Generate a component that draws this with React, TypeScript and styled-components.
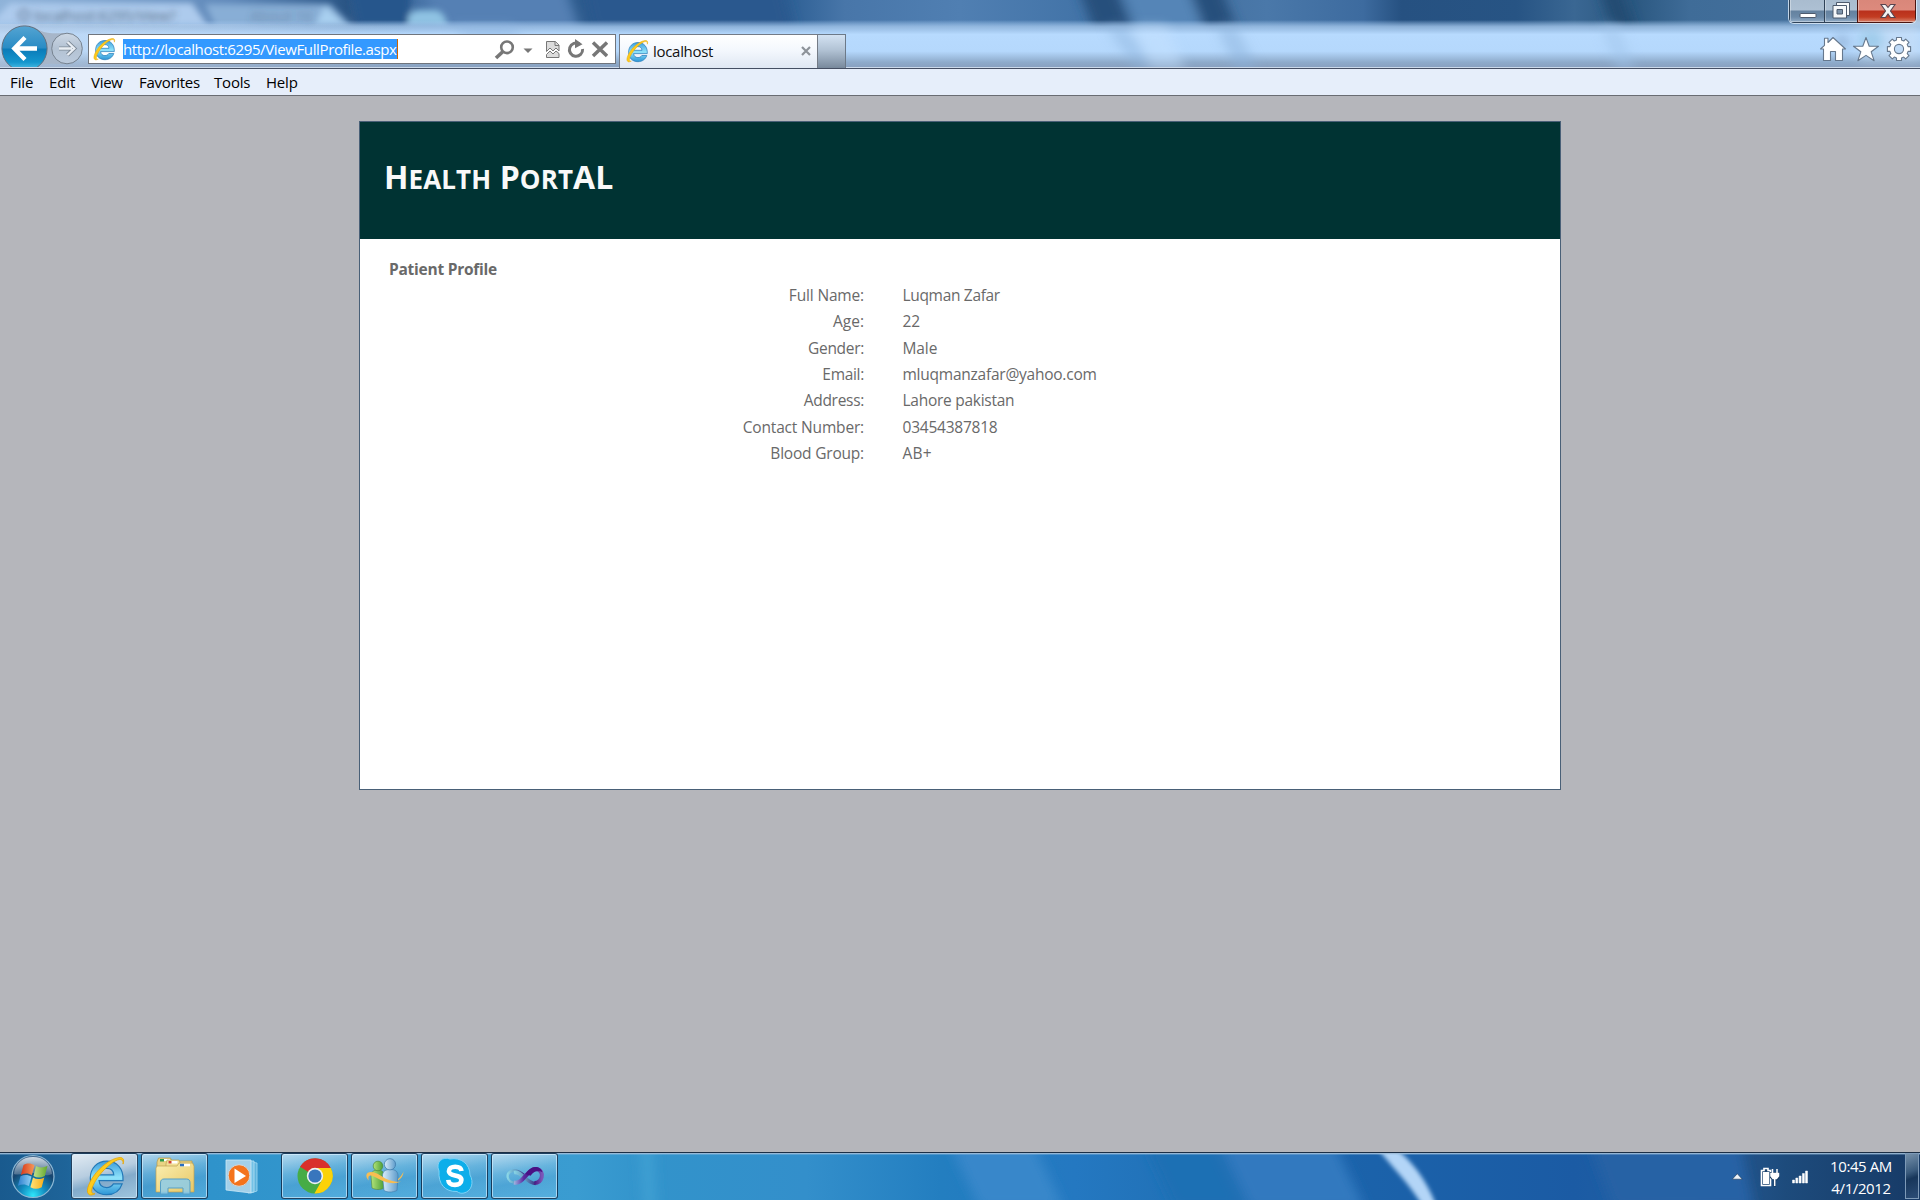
import React from "react";
import styled, { createGlobalStyle } from "styled-components";

const Global = createGlobalStyle`
  * { box-sizing: border-box; }
  html, body { margin: 0; padding: 0; }
  body { width: 1920px; height: 1200px; overflow: hidden; background: #b5b6bb; font-family: "Open Sans", "Noto Sans", sans-serif; }
  svg { display: block; flex: none; }
`;

const Screen = styled.div`
  width: 1920px;
  height: 1200px;
  display: flex;
  flex-direction: column;
  overflow: hidden;
`;

const Text = styled.span<{ $ls?: number; $size?: number }>`
  white-space: pre;
  letter-spacing: ${(p) => p.$ls ?? 0}px;
  font-size: ${(p) => p.$size ?? 15}px;
`;

/* ---------- window frame ---------- */
const Glass = styled.header`
  position: relative;
  height: 69px;
  flex: none;
  display: flex;
  flex-direction: column;
  overflow: hidden;
  border-bottom: 1px solid #454f63;
`;
const Backdrop = styled.svg`
  position: absolute;
  left: 0;
  top: 0;
`;
const CaptionRow = styled.div`
  position: relative;
  height: 24px;
  flex: none;
  display: flex;
  justify-content: flex-end;
  padding-right: 3px;
`;
const CaptionButtons = styled.div`
  display: flex;
  width: 129px;
  height: 24px;
  border: 1px solid rgba(225, 238, 250, 0.8);
  border-top: 0;
  border-radius: 0 0 6px 6px;
  overflow: hidden;
`;
const CaptionButton = styled.div<{ $w: number; $close?: boolean }>`
  width: ${(p) => p.$w}px;
  height: 23px;
  display: flex;
  justify-content: center;
  padding-left: 2px;
  border: 1px solid ${(p) => (p.$close ? "#4b1410" : "#2f4257")};
  border-top: 0;
  border-right-width: ${(p) => (p.$close ? 1 : 0)}px;
  box-shadow: inset 1px -1px 0 rgba(255, 255, 255, 0.35);
  background: ${(p) =>
    p.$close
      ? "linear-gradient(#d9877a 0, #dd8a7d 10px, #b9301c 11px, #c23c22 17px, #d8836c 22px)"
      : "linear-gradient(#a9bccf 0, #adc0d3 10px, #64819f 11px, #6c8aa9 17px, #93aec8 22px)"};
`;
const NavRow = styled.div`
  position: relative;
  height: 43px;
  flex: none;
  display: flex;
  align-items: flex-start;
`;
const NavButtons = styled.div`
  width: 88px;
  height: 43px;
`;
const AddressBar = styled.div`
  width: 528px;
  height: 30px;
  margin-top: 10px;
  display: flex;
  align-items: center;
  background: #fff;
  border: 1px solid #70757d;
  padding: 0 7px 0 3px;
`;
const Url = styled.div`
  margin-left: 7px;
  width: 275px;
  height: 20px;
  display: flex;
  align-items: center;
  background: #3399ff;
  border-right: 1px solid #cc6600;
  color: #fff;
`;
const AddressIcons = styled.div`
  margin-left: auto;
`;
const Tab = styled.div`
  margin: 10px 0 0 3px;
  width: 199px;
  height: 34px;
  display: flex;
  align-items: center;
  padding: 0 6px 2px 5px;
  border: 1px solid #747b86;
  border-bottom: 0;
  background: linear-gradient(#fff 0, #f3f7fd 16px, #dfe7f3 33px);
  color: #111;
`;
const TabLabel = styled.div`
  margin-left: 4px;
  flex: 1;
`;
const NewTab = styled.div`
  margin-top: 10px;
  width: 28px;
  height: 34px;
  border: 1px solid #6c7988;
  border-left: 0;
  border-bottom: 0;
  background: linear-gradient(#d3e2f2, #b2c3d5 45%, #78899c);
`;
const Tools = styled.div`
  margin: 11px 7px 0 auto;
`;
const MenuBar = styled.nav`
  height: 27px;
  flex: none;
  display: flex;
  align-items: center;
  padding-left: 10px;
  background: #e6eefa;
  border-bottom: 1px solid #696c72;
  color: #000;
`;
const MenuItem = styled.div<{ $w: number }>`
  width: ${(p) => p.$w}px;
`;

/* ---------- page ---------- */
const Page = styled.main`
  height: 1056px;
  flex: none;
  display: flex;
  justify-content: center;
  align-items: flex-start;
  padding-top: 25px;
  background: #b5b6bb;
`;
const Card = styled.section`
  width: 1202px;
  height: 669px;
  background: #fff;
  border: 1px solid #496077;
`;
const CardHeader = styled.div`
  height: 117px;
  padding: 32px 0 0 24px;
  background: #003333;
`;
const Title = styled.h1`
  margin: 0;
  font-size: 32px;
  line-height: 46px;
  font-weight: 700;
  color: #f9f9f9;
  letter-spacing: 0.1px;
  white-space: pre;
`;
const SmallCaps = styled.span`
  font-size: 26px;
  text-transform: uppercase;
`;
const Heading = styled.h2`
  margin: 18px 0 0 29px;
  line-height: 24px;
  font-weight: 700;
  color: #696969;
  display: flex;
`;
const Details = styled.dl`
  margin: 1px 0 0;
  display: grid;
  grid-template-columns: 504px 1fr;
  column-gap: 38.5px;
  grid-auto-rows: 26.33px;
  align-items: center;
  color: #696969;
`;
const Term = styled.dt`
  text-align: right;
`;
const Value = styled.dd`
  margin: 0;
`;

/* ---------- taskbar ---------- */
const TaskBar = styled.footer`
  position: relative;
  height: 48px;
  flex: none;
  display: flex;
  overflow: hidden;
  border-top: 1px solid #1c2f45;
`;
const Start = styled.div`
  position: relative;
  width: 71px;
  padding: 1px 0 0 10px;
`;
const TaskButton = styled.div<{ $kind?: "active" | "plain" }>`
  position: relative;
  width: 67px;
  height: 46px;
  margin-right: 3px;
  display: flex;
  align-items: center;
  justify-content: center;
  border-radius: 3px;
  border: 1px solid ${(p) => (p.$kind === "plain" ? "transparent" : "rgba(10,40,70,.85)")};
  box-shadow: ${(p) => (p.$kind === "plain" ? "none" : "inset 0 0 0 1px rgba(215,240,255,.65)")};
  padding-right: ${(p) => (p.$kind === "plain" ? 3 : 0)}px;
  background: ${(p) =>
    p.$kind === "plain"
      ? "none"
      : p.$kind === "active"
        ? "linear-gradient(165deg, #e2ebf3 0, #b7cde0 42%, #83abcb 60%, #9fc6df 100%)"
        : "linear-gradient(170deg, rgba(225,240,250,.75) 0, rgba(150,205,235,.5) 38%, rgba(110,180,222,.4) 60%, rgba(120,200,240,.45) 100%)"};
`;
const Tray = styled.div`
  position: relative;
  margin-left: auto;
  display: flex;
`;
const Clock = styled.div`
  width: 76px;
  margin-left: 12px;
  height: 46px;
  display: flex;
  flex-direction: column;
  align-items: center;
  padding-top: 2px;
  color: #fff;
  line-height: 22px;
`;
const ShowDesktop = styled.div`
  width: 14px;
  height: 46px;
  margin: 0 1px 0 6px;
  border: 1px solid #7d9ab8;
  background: linear-gradient(160deg, #7590aa 0, #3a5b7d 40%, #17365a 55%, #2b4d77 100%);
`;

const IeLogo = ({ size, id }: { size: number; id: string }) => (
  <svg width={size} height={size} viewBox="0 0 24 24">
    <defs>
      <linearGradient id={id} x1="0" y1="0" x2="0" y2="1">
        <stop offset="0" stopColor="#3d9ddb" />
        <stop offset=".5" stopColor="#8fe3fb" />
        <stop offset="1" stopColor="#2c95d6" />
      </linearGradient>
    </defs>
    <path
      d="M22.3 14.6H8.6c.2 2.6 1.900 4 4.300 4 1.800 0 3-.7 3.900-2.100h5c-1.300 3.900-4.700 6.200-8.900 6.200-5.500 0-9.300-3.900-9.300-9.500 0-5.700 4-9.700 9.400-9.700 5.800 0 9.700 4.300 9.300 11.100zM8.700 11.300h8.300c-.2-2.300-1.700-3.700-4-3.700-2.400 0-4 1.400-4.300 3.700z"
      fill={`url(#${id})`}
      stroke="#2379b8"
      strokeWidth=".7"
    />
    <path
      d="M22.300 5.200C23.200 2.600 22.400 1.200 20 1.500c-4.500.5-10.800 5.200-14.500 10.500-3.400 4.900-4.700 9.600-2.400 10.700.8.4 2 .1 3.200-.6-1.600.2-2.200-.6-1.900-2.200.6-3.100 3.400-7.700 7.200-11.500C15.300 4.700 19 2.200 21 2.600c1.100.2 1.500 1 1.300 2.600z"
      fill="#fccb1c"
      stroke="#e6a70d"
      strokeWidth=".5"
    />
  </svg>
);

const GlassArt = () => (
  <Backdrop width="1920" height="68" viewBox="0 0 1920 68">
    <defs>
      <linearGradient id="topbase" x1="0" x2="1" y1="0" y2="0">
        <stop offset="0" stopColor="#8fb3d9" />
        <stop offset=".12" stopColor="#5f88b9" />
        <stop offset=".18" stopColor="#2a5585" />
        <stop offset=".22" stopColor="#4672a6" />
        <stop offset=".3" stopColor="#2b598b" />
        <stop offset=".41" stopColor="#2d5f94" />
        <stop offset=".44" stopColor="#4876a9" />
        <stop offset=".5" stopColor="#507fb2" />
        <stop offset=".56" stopColor="#4374a8" />
        <stop offset=".61" stopColor="#426f9f" />
        <stop offset=".66" stopColor="#4a78a9" />
        <stop offset=".71" stopColor="#3d6b9f" />
        <stop offset=".73" stopColor="#265181" />
        <stop offset=".79" stopColor="#275484" />
        <stop offset=".82" stopColor="#3a6793" />
        <stop offset=".85" stopColor="#2a5780" />
        <stop offset=".88" stopColor="#3f6c98" />
        <stop offset=".94" stopColor="#44709c" />
        <stop offset=".965" stopColor="#7898b8" />
        <stop offset="1" stopColor="#a9c0d8" />
      </linearGradient>
      <linearGradient id="band" x1="0" x2="0" y1="0" y2="1">
        <stop offset="0" stopColor="#b5d8fd" stopOpacity="0" />
        <stop offset=".14" stopColor="#a0c3e8" stopOpacity=".85" />
        <stop offset=".3" stopColor="#b7dafe" />
        <stop offset=".65" stopColor="#b5d8fc" />
        <stop offset=".88" stopColor="#8eabcb" />
        <stop offset="1" stopColor="#889fbe" />
      </linearGradient>
      <filter id="b3" x="-20%" y="-50%" width="140%" height="200%">
        <feGaussianBlur stdDeviation="3" />
      </filter>
      <filter id="b6" x="-50%" y="-50%" width="200%" height="200%">
        <feGaussianBlur stdDeviation="6" />
      </filter>
      <linearGradient id="edge" x1="0" x2="1" y1="0" y2="0">
        <stop offset="0" stopColor="#c6d6ea" />
        <stop offset="1" stopColor="#c6d6ea" stopOpacity="0" />
      </linearGradient>
    </defs>
    <rect width="1920" height="68" fill="url(#topbase)" />
    <g filter="url(#b6)">
      <path d="M418 -20h145l18 52H440z" fill="#5480b4" />
      <path d="M580 -20h200l14 52H592z" fill="#2a598e" />
      <path d="M1075 -20h38l20 52h-38z" fill="#264f7b" />
      <path d="M1118 -20h66l20 52h-66z" fill="#5585b7" />
      <path d="M1186 -20h32l20 52h-32z" fill="#264f7b" />
      <path d="M1596 -20h22l18 52h-22z" fill="#234c72" />
    </g>
    <g filter="url(#b3)">
      <path d="M-10 24 L10 3 H192 L208 26z" fill="#adcbed" />
      <path d="M205 4 H330 L352 26 H215z" fill="#88aed6" />
      <path d="M325 6 L346 26 H315z" fill="#a9d0f0" />
      <path d="M350 -12h62l-4 38h-50z" fill="#27568c" />
      <path d="M408 26v-8q2-8 12-8h14q10 0 14 16z" fill="#8fc3e3" />
    </g>
    <rect y="20" width="1920" height="48" fill="url(#band)" />
    <g filter="url(#b6)" opacity=".5">
      <path d="M1105 26h20l34 44h-22z" fill="#8fb5de" />
      <path d="M1132 26h34l20 44h-34z" fill="#c6e2ff" />
      <path d="M1216 26h20l22 44h-22z" fill="#8cb2dc" />
      <path d="M1600 26h18l18 44h-18z" fill="#a0c4ea" />
      <path d="M450 26h60l18 14h-60z" fill="#8db4e0" />
      <circle cx="1872" cy="40" r="11" fill="#46a5d2" />
      <circle cx="1842" cy="42" r="7" fill="#6a87ac" />
    </g>
    <rect y="24" width="420" height="44" fill="url(#edge)" opacity=".45" />
    <rect x="1860" y="22" width="60" height="40" fill="#d5e1ef" opacity=".35" filter="url(#b6)" />
    <g filter="url(#b3)" fill="#46586e">
      <text x="34" y="21" fontSize="15" fontFamily="Open Sans" textLength="142" opacity=".85">
        localhost:6295/View?
      </text>
      <circle cx="24" cy="15" r="5" fill="none" stroke="#5d7290" strokeWidth="2" />
      <text x="250" y="21" fontSize="15" fontFamily="Open Sans" textLength="62" opacity=".4">
        About 10
      </text>
    </g>
    <rect y="67" width="1920" height="1" fill="#cbd9ea" />
  </Backdrop>
);

const NavArt = () => (
  <svg width="88" height="43" viewBox="0 24 88 43">
    <defs>
      <linearGradient id="back" x1="0" x2="0" y1="0" y2="1">
        <stop offset="0" stopColor="#54a4d2" />
        <stop offset=".48" stopColor="#2a8cc5" />
        <stop offset=".52" stopColor="#0b7bb9" />
        <stop offset=".8" stopColor="#1496cd" />
        <stop offset="1" stopColor="#5cc8ea" />
      </linearGradient>
      <linearGradient id="fwd" x1="0" x2="0" y1="0" y2="1">
        <stop offset="0" stopColor="#cdd8e5" />
        <stop offset=".5" stopColor="#b3c2d3" />
        <stop offset="1" stopColor="#bccbdd" />
      </linearGradient>
    </defs>
    <path d="M34 27c8 6 16 7 30 6v31c-14 0-22-2-27 4z" fill="#a7b6c9" />
    <circle cx="24.500" cy="48.500" r="22.600" fill="url(#back)" stroke="#626f7e" />
    <path d="M37 48.500H15M25 37.500L14.300 48.500l10.700 11" fill="none" stroke="#fff" strokeWidth="4.300" />
    <circle cx="67" cy="48.500" r="15.300" fill="url(#fwd)" stroke="#76828f" />
    <path d="M59 48.500h13M67.500 42l6.800 6.500-6.800 6.500" fill="none" stroke="#7d8996" strokeWidth="4" />
    <path d="M59 48.500h13M67.500 42l6.800 6.500-6.800 6.500" fill="none" stroke="#e9eef4" strokeWidth="2.300" />
  </svg>
);

const AddressArt = () => (
  <svg width="114" height="24" viewBox="494 37 114 24" fill="none" stroke="#777">
    <circle cx="507" cy="47.300" r="5.800" strokeWidth="2.600" />
    <path d="M503 51.500l-7 6.500" strokeWidth="3.600" />
    <path d="M523.500 48.500h9l-4.500 4.500z" fill="#777" stroke="none" />
    <path d="M546.500 41.500h9l3.500 3.500v6l-3-3-3 3-3-3-3.500 3.500z" fill="#dcdcdc" />
    <path d="M555 41.500v4h4M546.500 57.500h12.500v-4l-3-2.500-3 3-3-3-3.500 3.500z" fill="#dcdcdc" />
    <path d="M579.500 44a6.600 6.600 0 1 0 3.100 5" strokeWidth="3" />
    <path d="M575 39l7.500 5.200-7.500 4z" fill="#777" stroke="none" />
    <path d="M593 42.500l14 13.500M607 42.500L593 56" strokeWidth="3.500" />
  </svg>
);

const ToolsArt = () => (
  <svg width="94" height="28" viewBox="1819 35 94 28" fill="#fff" stroke="#66788d" strokeWidth="1.100" strokeLinejoin="round">
    <path d="M1833 37.500l12.500 11.500h-3v11.500h-7v-9h-5v9h-7V49h-3l4-3.700v-7h3.500v4.200z" />
    <path d="M1866 37.500l3.200 8.700h9.300l-7.300 5.600 2.900 8.900-8.100-5.300-8.100 5.300 2.900-8.900-7.300-5.600h9.300z" />
    <g transform="translate(1899 49)">
      <path
        fillRule="evenodd"
        d="M-2.500-11.500h5v2.600l2.200.9 2-1.900 3.300 3.300L8.200-4.600l.9 2.200h2.500v4.800H9.100L8.200 4.600l1.800 2-3.300 3.300-2-1.800-2.200.9v2.500h-5V9l-2.200-.9-2 1.800-3.300-3.300 1.800-2-.9-2.200h-2.500v-4.800h2.500l.9-2.200-1.800-2 3.300-3.300 2 1.900 2.200-.9zM0-4.600a4.600 4.600 0 1 0 0 9.200a4.600 4.600 0 1 0 0-9.200z"
      />
    </g>
  </svg>
);

const TaskArt = () => (
  <Backdrop width="1920" height="48" viewBox="0 0 1920 48">
    <defs>
      <linearGradient id="tb" x1="0" x2="1" y1="0" y2="0">
        <stop offset="0" stopColor="#195a8e" />
        <stop offset=".035" stopColor="#1e6499" />
        <stop offset=".07" stopColor="#2c8ac2" />
        <stop offset=".11" stopColor="#2f93cb" />
        <stop offset=".3" stopColor="#3a9cd1" />
        <stop offset=".34" stopColor="#3293cb" />
        <stop offset=".42" stopColor="#338fcb" />
        <stop offset=".49" stopColor="#237ec0" />
        <stop offset=".56" stopColor="#2478c1" />
        <stop offset=".63" stopColor="#206fb4" />
        <stop offset=".7" stopColor="#1b63ab" />
        <stop offset=".82" stopColor="#1b5ba4" />
        <stop offset=".88" stopColor="#2362a4" />
        <stop offset=".905" stopColor="#22548c" />
        <stop offset=".93" stopColor="#1d4b7c" />
        <stop offset="1" stopColor="#173a66" />
      </linearGradient>
      <filter id="b2" x="-50%" y="-50%" width="200%" height="200%">
        <feGaussianBlur stdDeviation="2" />
      </filter>
    </defs>
    <rect width="1920" height="48" fill="url(#tb)" />
    <g filter="url(#b6)">
      <path d="M950-8h84l30 64h-84z" fill="#3787ca" />
      <path d="M1220-8h115l30 64h-115z" fill="#3079bf" />
      <path d="M1145-8h70l30 64h-70z" fill="#1f70b4" />
      <path d="M640-8h12l4 64h-12z" fill="#41a0d3" />
      <path d="M1590-8h150l14 64h-140z" fill="#2762a5" />
    </g>
    <path d="M1376-6C1396 18 1410 32 1422 52h14C1426 26 1412 8 1394-6z" fill="#b3d5f7" filter="url(#b2)" />
    <rect width="1920" height="1" fill="#9fbdd8" opacity=".9" />
    <rect y="1" width="1920" height="1" fill="#9fc2e0" opacity=".35" />
  </Backdrop>
);

const StartOrb = () => (
  <svg width="46" height="46" viewBox="0 0 46 46">
    <defs>
      <radialGradient id="orb" cx=".5" cy=".95" r=".9">
        <stop offset="0" stopColor="#2ee6fb" />
        <stop offset=".35" stopColor="#1188bd" />
        <stop offset=".7" stopColor="#17456f" />
        <stop offset="1" stopColor="#456a8f" />
      </radialGradient>
      <linearGradient id="gloss" x1="0" x2="0" y1="0" y2="1">
        <stop offset="0" stopColor="#e8eef4" stopOpacity=".85" />
        <stop offset="1" stopColor="#b8c4d0" stopOpacity=".3" />
      </linearGradient>
      <linearGradient id="flagR" x1="0" x2="1"><stop offset="0" stopColor="#d83a1c" /><stop offset="1" stopColor="#f59a5a" /></linearGradient>
      <linearGradient id="flagG" x1="0" x2="1"><stop offset="0" stopColor="#c3e08a" /><stop offset="1" stopColor="#62a82c" /></linearGradient>
      <linearGradient id="flagB" x1="0" x2="1"><stop offset="0" stopColor="#2d7fce" /><stop offset="1" stopColor="#8fd0f5" /></linearGradient>
      <linearGradient id="flagY" x1="0" x2="1"><stop offset="0" stopColor="#ffe27a" /><stop offset="1" stopColor="#f6ae18" /></linearGradient>
    </defs>
    <circle cx="23" cy="22.500" r="21" fill="url(#orb)" stroke="#8db8d4" strokeWidth="1.200" />
    <path d="M4 20C5 9 13 3 23 3s18 6 19 17c-6 3-11 0-19-1s-13 3-19 1z" fill="url(#gloss)" />
    <path d="M13.500 11c4-2.200 7.500-1.800 11 .2l-2.600 10c-3.700-2.200-7-2.300-11-.3z" fill="url(#flagR)" />
    <path d="M26 12c3.700 2 7.500 1.800 11.500-.2L34.800 22c-4 2-7.700 2-11.300 0z" fill="url(#flagG)" />
    <path d="M10.500 22.300c4-2 7.500-1.800 11 .3l-2.600 9.500c-3.700-2.200-7-2.200-11-.3z" fill="url(#flagB)" />
    <path d="M23 23.500c3.700 2.100 7.200 2 11.300 0l-2.600 9.700c-4 2-7.500 2-11.300 0z" fill="url(#flagY)" />
  </svg>
);

const ExplorerIcon = () => (
  <svg width="42" height="40" viewBox="0 0 42 40">
    <defs>
      <linearGradient id="fold" x1="0" x2="1" y1="0" y2="1">
        <stop offset="0" stopColor="#fbefb1" />
        <stop offset="1" stopColor="#e6c765" />
      </linearGradient>
    </defs>
    <path d="M3 6l1.500-4h12L18 5h20v30H3z" fill="#e9d384" stroke="#b59a4a" strokeWidth=".7" />
    <path d="M6 3h10v2H6z" fill="#fff" /><path d="M6 3h4v2.500H6z" fill="#2d9b4b" />
    <path d="M12 8l1-4h12l1.500 3.500H39V35H12z" fill="#f2df94" stroke="#b59a4a" strokeWidth=".6" />
    <path d="M14.500 5h9v2.500h-9z" fill="#fff" /><path d="M14.500 5h3v2.500h-3z" fill="#d2402c" />
    <path d="M2 12l1-2h20l2-3h13.500l1.500 3v26H2z" fill="url(#fold)" stroke="#c0a251" strokeWidth=".7" />
    <path d="M26 7.800h10v2.500H26z" fill="#fff" /><path d="M26 7.800h4v2.500h-4z" fill="#2a6fc2" />
    <path d="M6.500 38V27c0-3 1.500-4 3.500-4h22.500c2.500 0 3.500 1.500 3.500 4v11h-7v-6H14v6z" fill="#8ccbea" fillOpacity=".85" stroke="#579fc5" />
  </svg>
);
const PlayerIcon = () => (
  <svg width="36" height="36" viewBox="0 0 36 36">
    <path d="M26 4l6 1v28l-6 2z" fill="#5fb4de" stroke="#a5dbf1" strokeWidth=".8" />
    <path d="M23 3h6v31l-6 1z" fill="#74c1e6" stroke="#b5e1f4" strokeWidth=".8" />
    <path d="M1 2h25v33L1 32z" fill="#a3d0e9" stroke="#cbe8f6" strokeWidth=".8" />
    <circle cx="14" cy="17.500" r="10.800" fill="#f4731c" stroke="#cfd9de" strokeWidth="1" />
    <path d="M9.500 10.500L21 18l-11.500 7z" fill="#fff" />
  </svg>
);
const ChromeIcon = () => (
  <svg width="38" height="38" viewBox="0 0 38 38">
    <circle cx="19" cy="19" r="17.500" fill="#46ac46" />
    <path d="M19 19L4 9.800A17.500 17.500 0 0 1 34.800 11H19z" fill="#d92f2b" />
    <path d="M19 11h15.800A17.500 17.500 0 0 1 18.400 36.500L26 23z" fill="#fbd208" />
    <circle cx="19" cy="19" r="8.200" fill="#eef2f5" />
    <circle cx="19" cy="19" r="6.600" fill="#3876bd" />
  </svg>
);
const MessengerIcon = () => (
  <svg width="40" height="36" viewBox="0 0 40 36">
    <defs>
      <linearGradient id="mg" x1="0" x2="1"><stop offset="0" stopColor="#b4e47a" /><stop offset="1" stopColor="#4c9f38" /></linearGradient>
      <linearGradient id="mb" x1="0" x2="1"><stop offset="0" stopColor="#d9eefb" /><stop offset="1" stopColor="#5d9bcb" /></linearGradient>
    </defs>
    <path d="M6 18c0-4.500 3-6 7-6s6 2 6 6v12c-4 2-8 2-12 0z" fill="url(#mg)" stroke="#53893a" strokeWidth=".6" />
    <circle cx="13" cy="8" r="4.800" fill="url(#mg)" stroke="#4c8a3b" strokeWidth=".7" />
    <path d="M17.500 18c0-5 3-6.500 8-6.500s7.500 2 7.500 6.500l-1 14.500c-5 2-9 2-13 0z" fill="url(#mb)" stroke="#3e79a8" strokeWidth=".6" />
    <circle cx="25" cy="6.300" r="5.600" fill="url(#mb)" stroke="#3a76a6" strokeWidth=".7" />
    <path d="M4 22.500C0 19 .5 14 6 14c6 0 11 5.500 18 8 5 1.800 9 2 12 1.500-5 2.500-11 2-16.500 0C13 21.500 8.500 17 5 17.500c-2 .5-2 3-1 5z" fill="#f8bd52" />
    <path d="M33 21c2-1.500 4-4 5.500-7.500-.2 4-2 7-5.500 9z" fill="#f8bd52" />
  </svg>
);
const SkypeIcon = () => (
  <svg width="38" height="38" viewBox="0 0 38 38">
    <path d="M3 14C-1 5 7-1 14 2c11-2 20 5 20 16 4 7 2 16-6 18-3 .7-5 0-7-1.500C9 35 2 27 3 14z" fill="#0daeea" stroke="#7ed2f6" strokeWidth="1" />
    <path d="M25.500 14c-.4-3-3-4.300-6.300-4.300-3.800 0-6.300 1.700-6.300 4.500 0 6 12.500 2.600 12.500 8.900 0 3-2.700 4.800-6.400 4.800-3.800 0-6.500-1.700-6.700-5" fill="none" stroke="#fff" strokeWidth="4.600" />
  </svg>
);
const StudioIcon = () => (
  <svg width="40" height="24" viewBox="0 0 40 24">
    <defs>
      <linearGradient id="vsRing" x1="0" x2="1"><stop offset="0" stopColor="#8ad6e6" /><stop offset=".55" stopColor="#5b93bd" /><stop offset="1" stopColor="#3c2f86" /></linearGradient>
      <linearGradient id="vsBand" x1="0" x2="1"><stop offset="0" stopColor="#9fb4e0" /><stop offset=".35" stopColor="#5a2aa0" /><stop offset=".7" stopColor="#43107a" /><stop offset="1" stopColor="#7a55b8" /></linearGradient>
    </defs>
    <path d="M19 11C15 7.500 12 6 8.500 6.500 4.500 7.500 2 10 2.800 13.500c1 4 5 5.500 9.200 4.500" fill="none" stroke="url(#vsRing)" strokeWidth="2.400" />
    <path d="M9 8.500c4-1 7 2 11 5.500s7 5.500 10.500 5.500" fill="none" stroke="url(#vsRing)" strokeWidth="3.600" />
    <path d="M9 18.500c5 1 8-2.500 11.500-6.500C24 8 27 4.500 31 5c5 .5 6.500 4.500 5.700 8s-3.500 6-7.200 6" fill="none" stroke="url(#vsBand)" strokeWidth="4" />
    <path d="M20.500 10C24 5 28 2.300 32 3c3 .6 5 2.800 5.500 5.200-4-2-8-1.500-12 3.500z" fill="#4a1084" />
  </svg>
);

const TrayArt = () => (
  <svg width="80" height="46" viewBox="1731 1153 80 46">
    <path d="M1732.300 1179.200l5-5.500 5 5.500z" fill="#eef3f8" stroke="#1b3554" strokeWidth=".6" />
    <path d="M1761.500 1170.500h2.500v-2h4v2h2.500v15h-9z" fill="#1e4570" stroke="#fff" strokeWidth="1.600" />
    <path d="M1763 1172h6v12h-6z" fill="#fff" />
    <path d="M1770 1172h9.500v6l-2.500 2.500h-1v6h-2.500v-6l-3.500-2.500z" fill="#173a60" />
    <path d="M1772.500 1169v4M1777 1169v4M1771 1173.500h7.500v2.500l-2 2.500h-3.500l-2-2.500zM1774.700 1179v7" stroke="#fff" fill="#fff" strokeWidth="1.500" />
    <path d="M1792.500 1183v-3h2v3zM1795.800 1183v-5h2v5zM1799.100 1183v-7h2v7zM1802.400 1183v-9.500h2v9.500zM1805.500 1183v-12h2v12z" fill="#fff" stroke="#fff" strokeWidth=".5" />
  </svg>
);

const menu: [string, number, number][] = [
  ["File", 39, -0.1],
  ["Edit", 42, -0.1],
  ["View", 48, -0.3],
  ["Favorites", 75, -0.3],
  ["Tools", 52, -0.2],
  ["Help", 40, -0.2],
];

const rows: [string, string, number, number][] = [
  ["Full Name:", "Luqman Zafar", -0.16, -0.32],
  ["Age:", "22", 0, -0.2],
  ["Gender:", "Male", -0.3, -0.1],
  ["Email:", "mluqmanzafar@yahoo.com", -0.3, -0.24],
  ["Address:", "Lahore pakistan", -0.3, -0.27],
  ["Contact Number:", "03454387818", -0.17, -0.23],
  ["Blood Group:", "AB+", -0.2, 0.2],
];

export default function App() {
  return (
    <Screen>
      <Global />
      <Glass>
        <GlassArt />
        <CaptionRow>
          <CaptionButtons>
            <CaptionButton $w={35}>
              <svg width="18" height="20"><rect x="1" y="13.500" width="16" height="4" rx="1" fill="#fff" stroke="#4d5a6d" /></svg>
            </CaptionButton>
            <CaptionButton $w={33}>
              <svg width="20" height="20" fill="none">
                <path d="M4.500 2.500h13v13h-13z" fill="#f6f8fa" stroke="#4d5a6d" />
                <path d="M1 5.500h13.500V18H1z" fill="#f6f8fa" stroke="#4d5a6d" />
                <path d="M5 9.500h5.500v4.500H5z" fill="#7e94ab" stroke="#4d5a6d" />
              </svg>
            </CaptionButton>
            <CaptionButton $w={59} $close>
              <svg width="18" height="20">
                <path d="M2 4.500h4.500l2.500 3 2.500-3H16l-4.500 6.500 4.500 6.500h-4.500L9 14l-2.500 3.500H2L6.500 11z" fill="#f3f3f3" stroke="#59434e" strokeWidth="1.100" />
              </svg>
            </CaptionButton>
          </CaptionButtons>
        </CaptionRow>
        <NavRow>
          <NavButtons><NavArt /></NavButtons>
          <AddressBar>
            <IeLogo size={24} id="ie1" />
            <Url><Text $ls={-0.38}>http://localhost:6295/ViewFullProfile.aspx</Text></Url>
            <AddressIcons><AddressArt /></AddressIcons>
          </AddressBar>
          <Tab>
            <IeLogo size={24} id="ie2" />
            <TabLabel><Text $ls={-0.3}>localhost</Text></TabLabel>
            <svg width="11" height="10"><path d="M2 1l8 8M10 1L2 9" stroke="#8d9299" strokeWidth="2.200" /></svg>
          </Tab>
          <NewTab />
          <Tools><ToolsArt /></Tools>
        </NavRow>
      </Glass>
      <MenuBar>
        {menu.map(([label, w, ls]) => (
          <MenuItem key={label} $w={w}><Text $ls={ls}>{label}</Text></MenuItem>
        ))}
      </MenuBar>
      <Page>
        <Card>
          <CardHeader>
            <Title>
              H<SmallCaps>ealth</SmallCaps> P<SmallCaps>ort</SmallCaps>AL
            </Title>
          </CardHeader>
          <Heading><Text $ls={-0.25} $size={15.5}>Patient Profile</Text></Heading>
          <Details>
            {rows.map(([term, value, a, b]) => (
              <React.Fragment key={term}>
                <Term><Text $ls={a} $size={15.5}>{term}</Text></Term>
                <Value><Text $ls={b} $size={15.5}>{value}</Text></Value>
              </React.Fragment>
            ))}
          </Details>
        </Card>
      </Page>
      <TaskBar>
        <TaskArt />
        <Start><StartOrb /></Start>
        <TaskButton $kind="active"><IeLogo size={42} id="ie3" /></TaskButton>
        <TaskButton><ExplorerIcon /></TaskButton>
        <TaskButton $kind="plain"><PlayerIcon /></TaskButton>
        <TaskButton><ChromeIcon /></TaskButton>
        <TaskButton><MessengerIcon /></TaskButton>
        <TaskButton><SkypeIcon /></TaskButton>
        <TaskButton><StudioIcon /></TaskButton>
        <Tray>
          <TrayArt />
          <Clock>
            <Text $ls={-0.4}>10:45 AM</Text>
            <Text $ls={-0.4}>4/1/2012</Text>
          </Clock>
          <ShowDesktop />
        </Tray>
      </TaskBar>
    </Screen>
  );
}
